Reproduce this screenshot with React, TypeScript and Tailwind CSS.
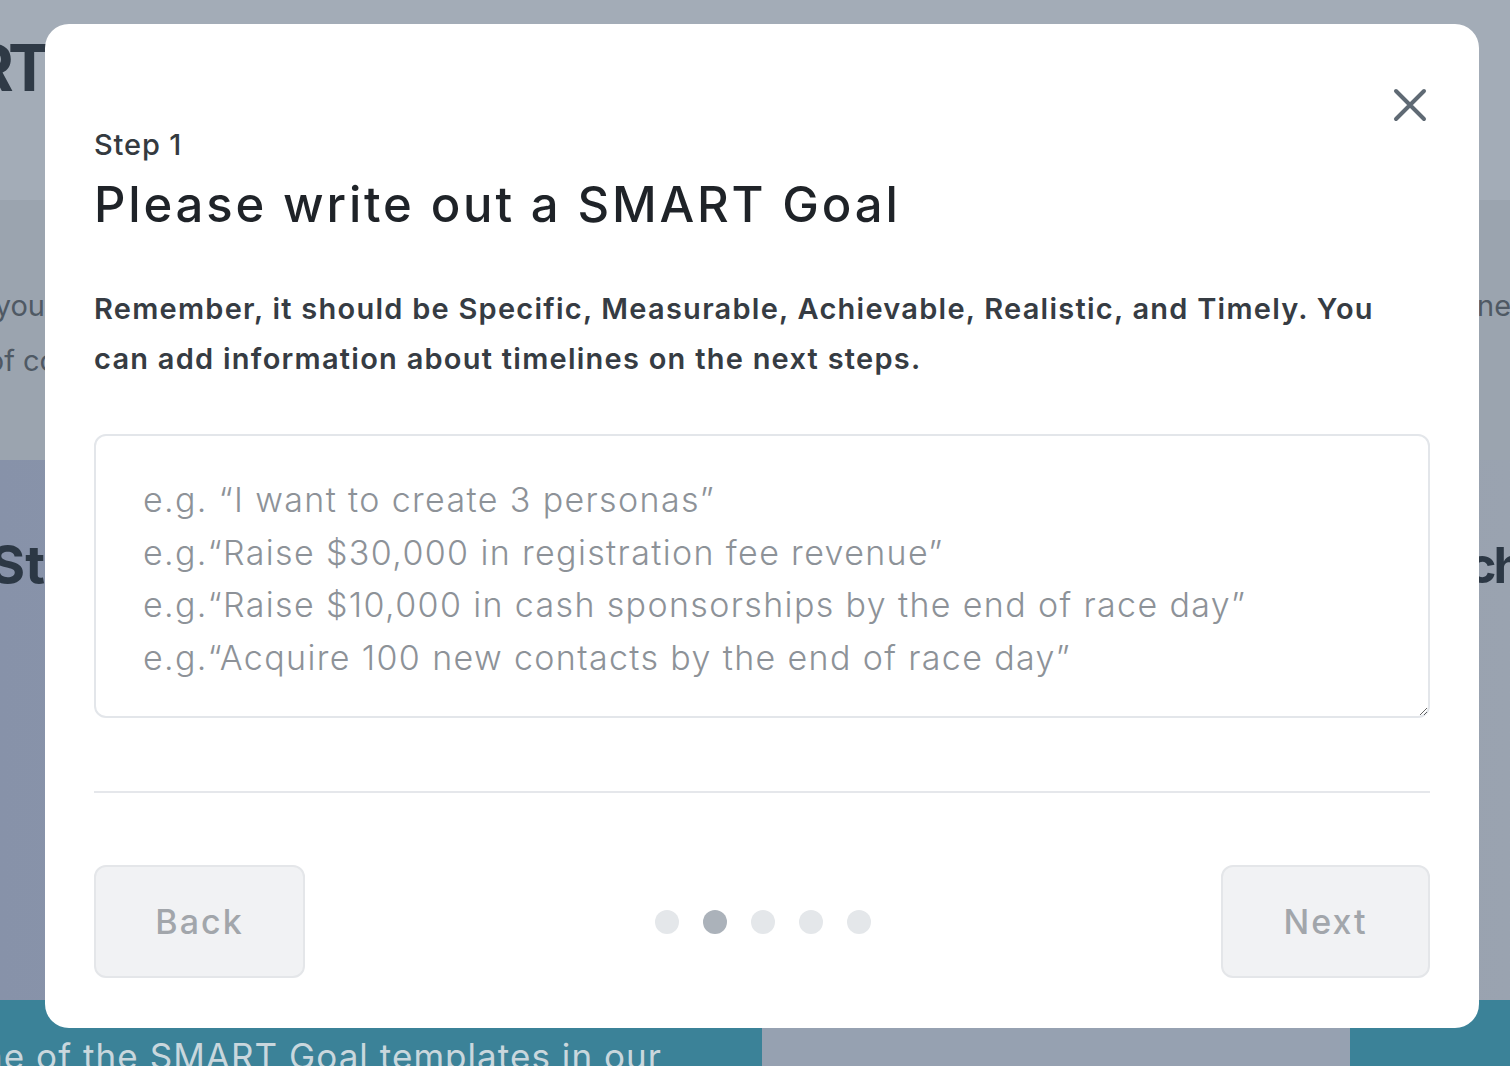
export default function App() {
  return (
    <div className="relative h-[1066px] w-full overflow-hidden font-['Inter',_'Lato',_sans-serif]">
      {/* page behind the dialog */}
      <div className="flex h-[200px] bg-[#a3acb7]">
        <div className="flex w-[45px] justify-end pt-[36px]">
          <span className="whitespace-nowrap text-[64px] font-bold leading-none tracking-[-0.09em] text-[#2f3a46]">
            SMART
          </span>
        </div>
        <div className="flex-1" />
      </div>

      <div className="flex h-[260px] bg-[#9ba4af]">
        <div className="flex w-[45px] flex-col items-end pt-[78px] text-[29px] leading-[55px] text-[#4f5964]">
          <span className="whitespace-nowrap">for you</span>
          <span className="-mr-[12px] whitespace-nowrap">of co</span>
        </div>
        <div className="flex-1" />
        <div className="w-[31px] pt-[78px] text-[29px] leading-[55px] text-[#4f5964]">
          <span className="-ml-[2px] whitespace-nowrap">ne</span>
        </div>
      </div>

      <div className="flex h-[540px] bg-gradient-to-r from-[#8792a9] to-[#9aa3b0]">
        <div className="flex w-[45px] justify-end pt-[72px]">
          <span className="whitespace-nowrap text-[54px] font-bold leading-[66px] text-[#2c3845]">
            First St
          </span>
        </div>
        <div className="flex-1" />
        <div className="w-[31px] pt-[72px]">
          <span className="-ml-[12px] whitespace-nowrap text-[50px] font-bold leading-[66px] tracking-[-0.06em] text-[#2c3845]">
            ch
          </span>
        </div>
      </div>

      <div className="flex h-[66px]">
        <div className="w-[762px] bg-[#3b8298] pt-[36px]">
          <span className="-ml-[40px] block whitespace-nowrap text-[35px] leading-[40px] tracking-[0.03em] text-[#c9d7dd]">
            one of the SMART Goal templates in our
          </span>
        </div>
        <div className="flex-1 bg-[#96a1b1]" />
        <div className="w-[160px] bg-[#3b8298]" />
      </div>

      {/* dialog */}
      <div className="absolute left-[45px] top-[24px] flex h-[1004px] w-[1434px] flex-col rounded-[24px] bg-white px-[49px] pt-[103px]">
        <button className="absolute right-[52px] top-[64px] h-[34px] w-[34px]">
          <svg viewBox="0 0 34 34" className="h-[34px] w-[34px]">
            <path
              d="M3 3 L31 31 M31 3 L3 31"
              stroke="#5f6a74"
              strokeWidth="4"
              strokeLinecap="round"
            />
          </svg>
        </button>

        <div className="text-[29px] font-medium leading-[36px] tracking-[0.03em] text-[#343a40]">
          Step 1
        </div>
        <h2 className="mt-[13px] text-[49px] font-medium leading-[58px] tracking-[0.058em] text-[#1f2328]">
          Please write out a SMART Goal
        </h2>

        <p className="mt-[50px] text-[29px] font-semibold leading-[50px] tracking-[0.043em] text-[#363c43]">
          Remember, it should be Specific, Measurable, Achievable, Realistic, and Timely. You
          <br />
          can add information about timelines on the next steps.
        </p>

        <textarea
          className="mt-[50px] h-[284px] w-full rounded-[12px] border-2 border-[#e3e6ea] px-[47px] pt-[38px] text-[34px] font-light leading-[52.7px] tracking-[0.04em] text-[#333] outline-none placeholder:text-[#8d9298]"
          placeholder={
            "e.g. \u201cI want to create 3 personas\u201d\ne.g.\u201cRaise $30,000 in registration fee revenue\u201d\ne.g.\u201cRaise $10,000 in cash sponsorships by the end of race day\u201d\ne.g.\u201cAcquire 100 new contacts by the end of race day\u201d"
          }
        />

        <div className="mt-[73px] h-[2px] w-full bg-[#e5e7eb]" />

        <div className="mt-[72px] flex items-center justify-between">
          <button className="h-[113px] w-[211px] rounded-[12px] border-2 border-[#e4e6e9] bg-[#f1f2f4] text-[34px] font-medium tracking-[0.06em] text-[#a2a6ab]">
            Back
          </button>
          <div className="flex gap-6">
            <span className="h-6 w-6 rounded-full bg-[#e4e7ea]" />
            <span className="h-6 w-6 rounded-full bg-[#abb2ba]" />
            <span className="h-6 w-6 rounded-full bg-[#e4e7ea]" />
            <span className="h-6 w-6 rounded-full bg-[#e4e7ea]" />
            <span className="h-6 w-6 rounded-full bg-[#e4e7ea]" />
          </div>
          <button className="h-[113px] w-[209px] rounded-[12px] border-2 border-[#e4e6e9] bg-[#f1f2f4] text-[34px] font-medium tracking-[0.06em] text-[#a2a6ab]">
            Next
          </button>
        </div>
      </div>
    </div>
  );
}
